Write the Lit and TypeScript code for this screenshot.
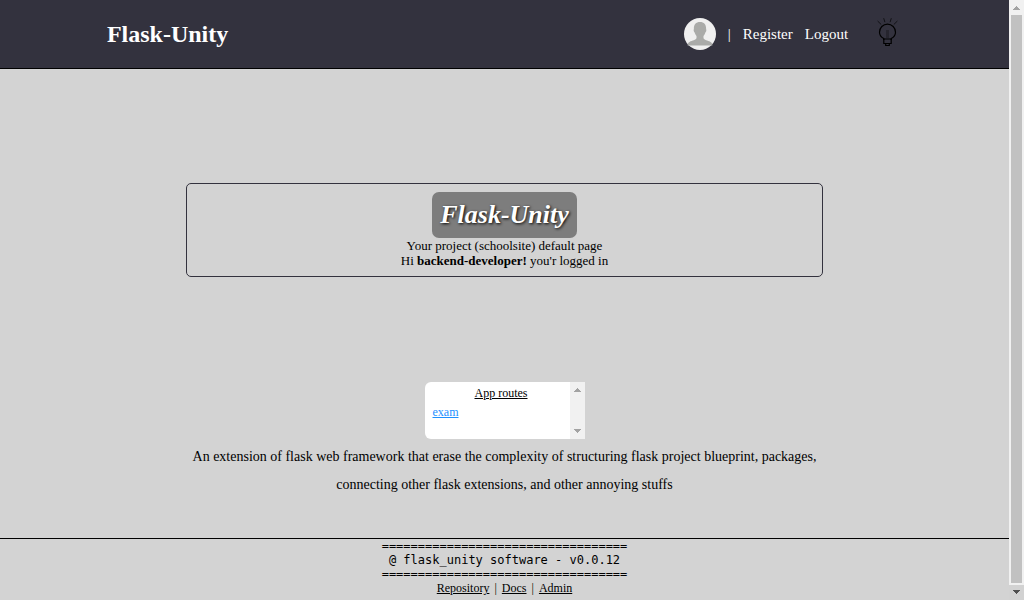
import { LitElement, html, css } from "lit";
import { customElement } from "lit/decorators.js";

@customElement("scroll-track")
class ScrollTrack extends LitElement {
  static styles = css`
    :host {
      display: flex;
      flex-direction: column;
      flex: none;
      width: 15px;
      background: #f1f1f1;
    }
    .arrow {
      flex: none;
      display: block;
      width: 15px;
      height: 15px;
      padding: 0;
      border: 0;
      background: transparent;
      color: #a3a3a3;
    }
    :host([more]) .down {
      background: #d2d2d2;
      color: #505050;
    }
    svg {
      display: block;
    }
    .lane {
      flex: 1;
      display: flex;
      padding: 0 2px 2px;
    }
    .thumb {
      flex: 1;
    }
    :host([more]) .thumb {
      background: #c1c1c1;
    }
  `;

  render() {
    return html`
      <button class="arrow up" aria-label="Scroll up">
        <svg width="15" height="15" viewBox="0 0 15 15" fill="currentColor" shape-rendering="crispEdges">
          <path d="M7 6h1v1h1v1h1v1h1v1H4V9h1V8h1V7h1z" />
        </svg>
      </button>
      <div class="lane"><div class="thumb"></div></div>
      <button class="arrow down" aria-label="Scroll down">
        <svg width="15" height="15" viewBox="0 0 15 15" fill="currentColor" shape-rendering="crispEdges">
          <path d="M4 5h7v1h-1v1H9v1H8v1H7V8H6V7H5V6H4z" />
        </svg>
      </button>
    `;
  }
}

@customElement("app-root")
class AppRoot extends LitElement {
  static styles = css`
    :host {
      display: flex;
      height: 100vh;
      overflow: hidden;
      background: #d3d3d3;
      color: #000;
      font-family: "Liberation Serif", "Times New Roman", serif;
      font-size: 12px;
    }
    .page {
      flex: 1;
      min-width: 0;
      display: flex;
      flex-direction: column;
    }
    header {
      display: flex;
      align-items: center;
      justify-content: space-between;
      height: 68px;
      padding: 0 10%;
      background: #33323e;
      border-bottom: 1px solid #000;
      color: #fff;
    }
    .brand {
      margin: 0 6px;
      font-size: 24px;
      font-weight: bold;
      line-height: 28px;
    }
    nav {
      display: flex;
      align-items: center;
      gap: 12px;
      font-size: 15px;
      line-height: 18px;
    }
    nav a {
      color: #fff;
      text-decoration: none;
    }
    .avatar,
    .bulb {
      display: block;
    }
    .theme {
      padding: 0;
      border: 0;
      margin: 0 5px 4px 11px;
      background: none;
      color: #000;
    }
    main {
      flex: 1;
      display: flex;
      flex-direction: column;
      align-items: center;
      justify-content: space-between;
      padding: 114px 0 39px;
      text-align: center;
    }
    .card {
      width: 63%;
      padding: 8px 0;
      border: 1px solid #33323e;
      border-radius: 5px;
      font-size: 13px;
      line-height: 15px;
    }
    .card p {
      margin: 0;
    }
    .logo {
      width: fit-content;
      margin: 0 auto;
      padding: 8px;
      border-radius: 7px;
      background: #7d7d7d;
      color: #fff;
      font-size: 26px;
      font-style: italic;
      font-weight: bold;
      line-height: 30px;
      text-shadow: 1px 1px 3px #000;
    }
    .about {
      display: flex;
      flex-direction: column;
      align-items: center;
      gap: 4px;
      width: 63%;
    }
    .routes {
      display: flex;
      width: 160px;
      height: 57px;
      overflow: hidden;
      border-radius: 6px 0 0 6px;
      background: #fff;
    }
    .list {
      flex: 1;
      padding: 4px 0 0 8px;
      line-height: 14px;
    }
    .list h2 {
      margin: 0 0 5px;
      font-size: 12px;
      font-weight: normal;
      text-decoration: underline;
    }
    .route {
      display: block;
      color: #1e90ff;
      text-align: left;
    }
    .about p {
      margin: 0;
      font-size: 14px;
      line-height: 28px;
    }
    footer {
      padding-bottom: 5px;
      border-top: 1px solid #000;
      line-height: 14px;
      text-align: center;
    }
    pre {
      margin: 0;
      font-family: "DejaVu Sans Mono", monospace;
      font-size: 12px;
    }
    .links {
      display: flex;
      justify-content: center;
      gap: 5px;
    }
    .links a {
      color: #000;
    }
  `;

  render() {
    const rule = "=".repeat(34);
    return html`
      <div class="page">
        <header>
          <div class="brand">Flask-Unity</div>
          <nav>
            <svg class="avatar" width="32" height="32" viewBox="0 0 32 32" role="img" aria-label="Profile">
              <circle cx="16" cy="16" r="16" fill="#f0f0f0" />
              <path
                fill="#aaaba9"
                d="M16 4c4 0 6.300 2.700 6.100 6.500 0 1 .4 1.200.2 2.300-.2 1.200-.9 1.500-1.200 2.400-.3 1.200-1 2-1.600 2.700v2.200c.4 2 4.200 2.400 7 3.800 1.300.7 1.900 1.900 1.900 3.600H3.600c0-1.700.6-2.900 1.900-3.600 2.800-1.400 6.600-1.800 7-3.800v-2.200c-.6-.7-1.300-1.500-1.600-2.700-.3-.9-1-1.200-1.200-2.400-.2-1.100.2-1.300.2-2.300C9.700 6.700 12 4 16 4z"
              />
            </svg>
            <span>|</span>
            <a href="#register">Register</a>
            <a href="#logout">Logout</a>
            <button class="theme" aria-label="Toggle theme">
              <svg class="bulb" width="32" height="32" viewBox="0 0 32 32" fill="none" stroke="currentColor">
                <path stroke-width="1.200" d="M12.800 24v-1.500C10.500 21.300 8.500 19.200 8.500 16.200a8 8 0 0 1 16 0c0 3-2 5.100-4.300 6.300V24" />
                <path stroke-width="1.200" d="M12.800 23h7.400v4.500h-7.400z" />
                <path stroke-width="1.200" d="M14.700 28v1.500h3.600V28" />
                <path stroke-opacity=".65" d="M6.600 5l3.600 3.500M12.700 2.200l1.200 4M20.300 2.200l-1.200 4M26.400 5l-3.600 3.500" />
                <path stroke-opacity=".25" stroke-width="3" d="M16.500 14v8" />
              </svg>
            </button>
          </nav>
        </header>
        <main>
          <section class="card">
            <div class="logo">Flask-Unity</div>
            <p>Your project (schoolsite) default page</p>
            <p>Hi <b>backend-developer!</b> you'r logged in</p>
          </section>
          <section class="about">
            <div class="routes">
              <div class="list">
                <h2>App routes</h2>
                <a class="route" href="#exam">exam</a>
              </div>
              <scroll-track></scroll-track>
            </div>
            <p>
              An extension of flask web framework that erase the complexity of structuring flask project blueprint,
              packages, connecting other flask extensions, and other annoying stuffs
            </p>
          </section>
        </main>
        <footer>
          <pre>${rule}
@ flask_unity software - v0.0.12
${rule}</pre>
          <div class="links">
            <a href="#repository">Repository</a><span>|</span><a href="#docs">Docs</a><span>|</span
            ><a href="#admin">Admin</a>
          </div>
        </footer>
      </div>
      <scroll-track more></scroll-track>
    `;
  }
}
